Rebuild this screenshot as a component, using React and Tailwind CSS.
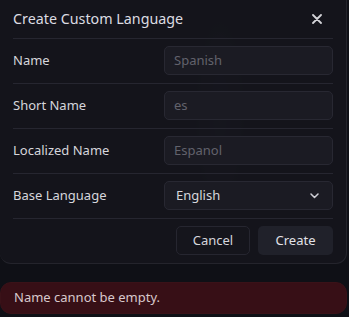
import React from "react";

function Row({ label, children }) {
  return (
    <div className="flex items-center justify-between border-t border-[#262630] pt-[7px] pb-[8px]">
      <span className="text-[13px] text-[#d6d6dc]">{label}</span>
      {children}
    </div>
  );
}

function Field({ placeholder }) {
  return (
    <div className="flex h-[29px] w-[169px] items-center rounded-[5px] border border-[#282832] bg-[#1b1b23] px-[9px] text-[13px] text-[#62626c]">
      {placeholder}
    </div>
  );
}

export default function App() {
  return (
    <div
      className="relative h-[317px] w-[349px] overflow-hidden bg-[#0f1016]"
      style={{ fontFamily: '"Noto Sans", "Open Sans", sans-serif' }}
    >
      <div className="pointer-events-none absolute left-[190px] top-0 h-[230px] w-[60px] bg-[radial-gradient(ellipse_at_center,rgba(60,66,100,0.35),transparent_70%)]" />
      <div className="relative flex h-[264px] w-[347px] flex-col rounded-b-[11px] border-b border-r border-[#24242c] bg-[#15151c]/90 px-[13px]">
        <div className="flex h-[38px] items-center justify-between">
          <span className="text-[14.3px] text-[#dcdce2]">Create Custom Language</span>
          <svg width="10" height="10" viewBox="0 0 10 10" className="mr-[11px]">
            <path d="M1 1 L9 9 M9 1 L1 9" stroke="#d4d4d8" strokeWidth="1.8" strokeLinecap="round" />
          </svg>
        </div>
        <Row label="Name">
          <Field placeholder="Spanish" />
        </Row>
        <Row label="Short Name">
          <Field placeholder="es" />
        </Row>
        <Row label="Localized Name">
          <Field placeholder="Espanol" />
        </Row>
        <Row label="Base Language">
          <div className="flex h-[29px] w-[169px] items-center justify-between rounded-[5px] border border-[#282832] bg-[#1b1b23] pl-[11px] pr-[13px] text-[13px] text-[#d6d6dc]">
            <span>English</span>
            <svg width="9" height="6" viewBox="0 0 9 6">
              <path d="M1 1 L4.5 4.5 L8 1" stroke="#cfcfd6" strokeWidth="1.5" fill="none" strokeLinecap="round" strokeLinejoin="round" />
            </svg>
          </div>
        </Row>
        <div className="flex justify-end gap-[8px] border-t border-[#262630] pt-[7px]">
          <div className="flex h-[29px] w-[74px] items-center justify-center rounded-[5px] border border-[#262630] bg-[#15151c] text-[13px] text-[#d6d6dc]">
            Cancel
          </div>
          <div className="flex h-[29px] w-[75px] items-center justify-center rounded-[5px] bg-[#20212a] text-[13px] text-[#e2e2e8]">
            Create
          </div>
        </div>
      </div>
      <div className="mt-[18px] flex h-[32px] w-[347px] items-center rounded-[11px] border border-[#3a1218] bg-[#370f16] px-[13px] text-[13px] text-[#d8c8cc]">
        Name cannot be empty.
      </div>
    </div>
  );
}
